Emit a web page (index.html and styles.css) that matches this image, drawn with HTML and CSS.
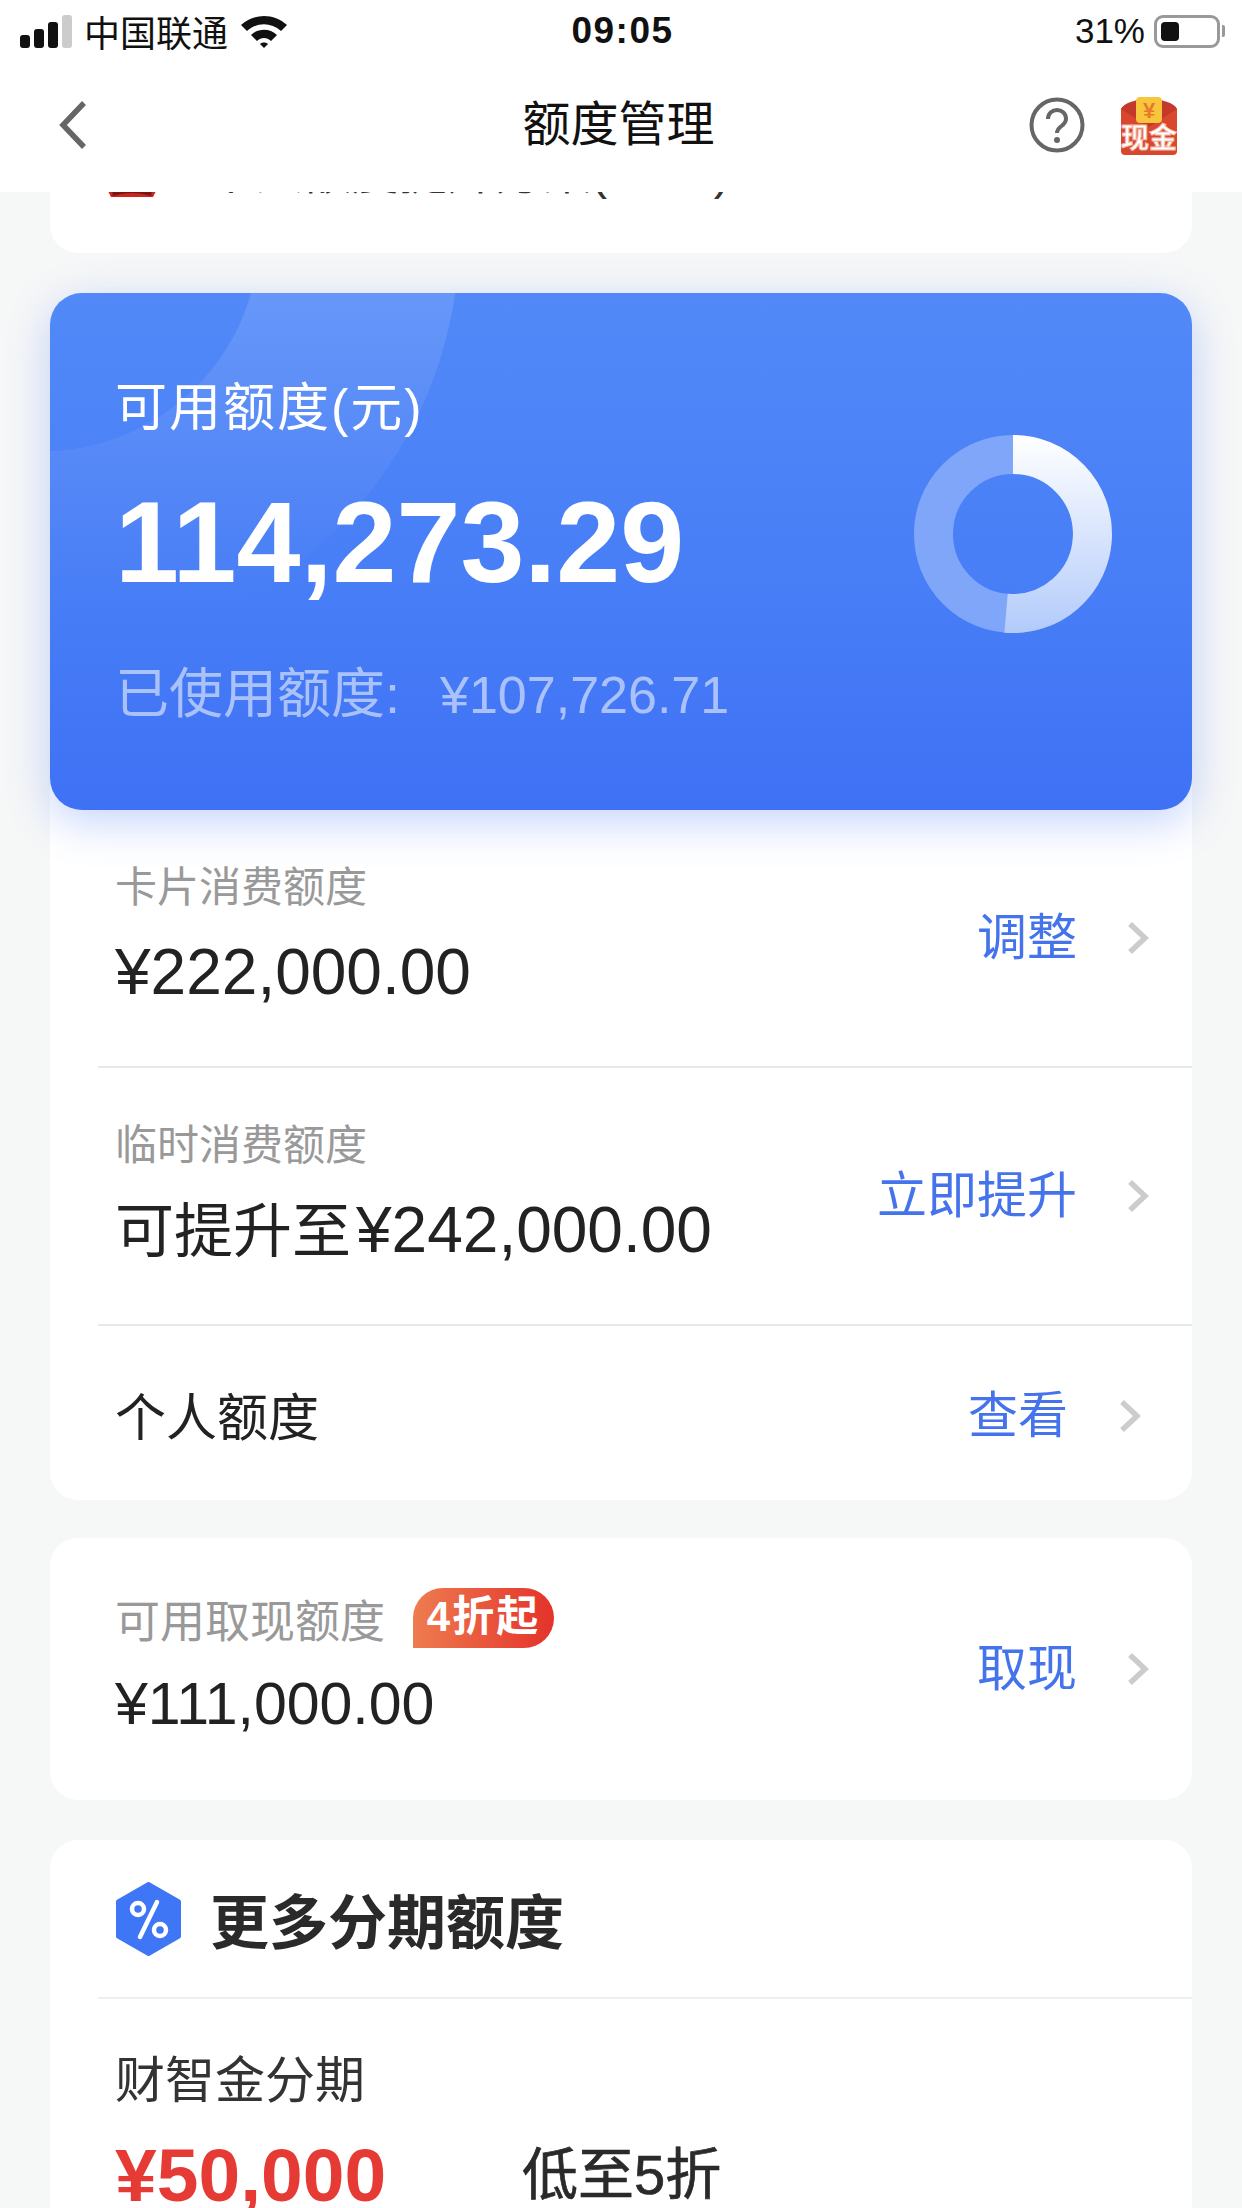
FILE: index.html
```html
<!DOCTYPE html>
<html lang="zh-CN">
<head>
  <meta charset="UTF-8">
  <title>额度管理</title>
  <link rel="stylesheet" href="styles.css">
</head>
<body>
  <div class="page">

    <header class="top">
      <div class="status">
        <div class="status-left">
          <div class="signal">
            <i class="bar-1"></i><i class="bar-2"></i><i class="bar-3"></i><i class="bar-4"></i>
          </div>
          <span>中国联通</span>
          <svg class="wifi" viewBox="0 0 48 34">
            <path d="M1 11C14 -1 34 -1 47 11L41 17C31 8 17 8 7 17Z"/>
            <path d="M11 21C18 14 30 14 37 21L31 27C27 23 21 23 17 27Z"/>
            <path d="M20 30C22 28 26 28 28 30L24 34Z"/>
          </svg>
        </div>
        <div class="clock">09:05</div>
        <div class="status-right">
          <span>31%</span>
          <div class="battery"><i></i></div>
          <div class="battery-tip"></div>
        </div>
      </div>
      <nav class="nav">
        <svg class="back" viewBox="0 0 30 50">
          <path d="M26 3L5 25L26 47" fill="none" stroke="#666" stroke-width="5.5"/>
        </svg>
        <h1>额度管理</h1>
        <div class="nav-icons">
          <svg class="help" viewBox="0 0 56 56">
            <circle cx="28" cy="28" r="25.5" fill="none" stroke="#666" stroke-width="4"/>
            <path d="M19 22C19 10 37 10 37 22C37 29 28 29 28 36" fill="none" stroke="#666" stroke-width="4"/>
            <circle cx="28" cy="43" r="3" fill="#666"/>
          </svg>
          <svg class="packet" viewBox="0 0 60 60">
            <path d="M2 14C8 3 52 3 58 14V56Q58 60 54 60H6Q2 60 2 56Z" fill="#d9472f"/>
            <path d="M2 14C8 1 52 1 58 14L30 32Z" fill="#c5392a"/>
            <rect x="17" y="2" width="26" height="26" rx="4" fill="#f7c63c"/>
            <text x="30" y="23" class="packet-yen">¥</text>
            <text x="30" y="53" class="packet-text">现金</text>
          </svg>
        </div>
      </nav>
    </header>

    <main class="content">
      <section class="card tips">
        <svg class="tips-icon" viewBox="0 0 48 48">
          <path d="M0 42H48L45 48H3Z" fill="#c8261f"/>
          <path d="M5 47Q24 41 43 47L44 42H4Z" fill="#7a1414"/>
        </svg>
        <span>个人额度提升方案(2021)</span>
      </section>

      <section class="hero">
        <div class="hero-text">
          <div class="hero-label">可用额度(元)</div>
          <div class="hero-amount">114,273.29</div>
          <div class="hero-used"><span class="hero-used-cn">已使用额度:</span><span>¥107,726.71</span></div>
        </div>
        <svg class="donut" viewBox="0 0 198 198">
          <defs>
            <linearGradient id="donut-fill" gradientUnits="userSpaceOnUse" x1="0" y1="0" x2="0" y2="198">
              <stop offset="0" stop-color="#ffffff"/>
              <stop offset="1" stop-color="#b3cbfb"/>
            </linearGradient>
          </defs>
          <circle cx="99" cy="99" r="79.5" fill="none" stroke="#7fa6f8" stroke-width="39"/>
          <path d="M99 19.5A79.5 79.5 0 1 1 92.07 178.2" fill="none" stroke="url(#donut-fill)" stroke-width="39"/>
        </svg>
      </section>

      <section class="panel">
        <div class="row">
          <div>
            <div class="label">卡片消费额度</div>
            <div class="value">¥222,000.00</div>
          </div>
          <div class="action">
            <span>调整</span>
            <svg class="arrow" viewBox="0 0 22 34"><path d="M3 3L18 17L3 31" fill="none" stroke="#ccc" stroke-width="5.5"/></svg>
          </div>
        </div>
        <div class="row">
          <div>
            <div class="label">临时消费额度</div>
            <div class="value"><span class="value-cn">可提升至</span>¥242,000.00</div>
          </div>
          <div class="action">
            <span>立即提升</span>
            <svg class="arrow" viewBox="0 0 22 34"><path d="M3 3L18 17L3 31" fill="none" stroke="#ccc" stroke-width="5.5"/></svg>
          </div>
        </div>
        <div class="row row-plain">
          <div class="plain-title">个人额度</div>
          <div class="action">
            <span>查看</span>
            <svg class="arrow" viewBox="0 0 22 34"><path d="M3 3L18 17L3 31" fill="none" stroke="#ccc" stroke-width="5.5"/></svg>
          </div>
        </div>
      </section>

      <section class="card cash">
        <div class="cash-left">
          <div class="cash-head">
            <span class="cash-label">可用取现额度</span>
            <span class="badge">4折起</span>
          </div>
          <div class="cash-value">¥111,000.00</div>
        </div>
        <div class="action">
          <span>取现</span>
          <svg class="arrow" viewBox="0 0 22 34"><path d="M3 3L18 17L3 31" fill="none" stroke="#ccc" stroke-width="5.5"/></svg>
        </div>
      </section>

      <section class="card more">
        <div class="more-head">
          <svg class="hex" viewBox="0 0 67 74">
            <path d="M33.5 2L64 19.5V54.5L33.5 72L3 54.5V19.5Z" fill="#3f76f6" stroke="#3f76f6" stroke-width="4" stroke-linejoin="round"/>
            <circle cx="23" cy="27" r="6" fill="none" stroke="#fff" stroke-width="4.5"/>
            <circle cx="45" cy="48" r="6" fill="none" stroke="#fff" stroke-width="4.5"/>
            <path d="M42 20L25 55" stroke="#fff" stroke-width="4.5" stroke-linecap="round"/>
          </svg>
          <h2>更多分期额度</h2>
        </div>
        <div class="more-body">
          <div class="more-name">财智金分期</div>
          <div class="more-offer">
            <span class="more-price">¥50,000</span>
            <span class="more-rate">低至5折</span>
          </div>
        </div>
      </section>
    </main>

  </div>
</body>
</html>
```

FILE: styles.css
```css
* {
  box-sizing: border-box;
}

html, body {
  margin: 0;
  padding: 0;
  height: 2208px;
  overflow: hidden;
}

body {
  font-family: "Liberation Sans", "Noto Sans CJK SC", sans-serif;
  background-color: #f6f7f7;
  color: #222;
}

.page {
  width: 1242px;
  height: 2208px;
  overflow: hidden;
}

/* top bar */
.top {
  position: relative;
  z-index: 3;
  height: 192px;
  background: #fff;
}

.status {
  height: 62px;
  padding: 0 17px 0 20px;
  display: grid;
  grid-template-columns: 1fr auto 1fr;
  align-items: center;
  font-size: 35px;
  color: #111;
}

.status-left {
  display: flex;
  align-items: center;
  gap: 12px;
  font-size: 36px;
}

.signal {
  display: flex;
  align-items: flex-end;
  gap: 4px;
  height: 33px;
}

.signal i {
  display: block;
  width: 10px;
  background: #111;
  border-radius: 3px;
}

.bar-1 { height: 13px; }
.bar-2 { height: 19px; }
.bar-3 { height: 26px; }
.bar-4 { height: 33px; background: #ccc !important; }

.wifi {
  width: 48px;
  height: 34px;
  fill: #111;
}

.clock {
  font-weight: bold;
  font-size: 37px;
  letter-spacing: 1.5px;
}

.status-right {
  display: flex;
  align-items: center;
  justify-content: flex-end;
}

.battery {
  width: 66px;
  height: 33px;
  margin-left: 9px;
  padding: 4px;
  border: 3px solid #999;
  border-radius: 9px;
}

.battery i {
  display: block;
  width: 18px;
  height: 100%;
  background: #111;
  border-radius: 4px;
}

.battery-tip {
  width: 3px;
  height: 12px;
  margin-left: 2px;
  background: #999;
  border-radius: 0 2px 2px 0;
}

.nav {
  height: 130px;
  padding: 0 63px 5px 58px;
  display: grid;
  grid-template-columns: 1fr auto 1fr;
  align-items: center;
}

.nav h1 {
  margin: 0;
  font-size: 48px;
  line-height: 48px;
  font-weight: normal;
  color: #111;
}

.nav-icons {
  display: flex;
  align-items: center;
  justify-content: flex-end;
  gap: 34px;
}

.back {
  width: 30px;
  height: 50px;
}

.help {
  width: 56px;
  height: 56px;
}

.packet {
  width: 60px;
  height: 60px;
}

.packet-yen {
  font-size: 22px;
  font-weight: bold;
  fill: #e8792a;
  text-anchor: middle;
}

.packet-text {
  font-size: 28px;
  font-weight: bold;
  fill: #fff;
  stroke: #f4b9a6;
  stroke-width: 1;
  text-anchor: middle;
}

/* cards */
.content {
  width: 1142px;
  margin-left: 50px;
}

.card {
  background: #fff;
  border-radius: 28px;
}

.tips {
  height: 104px;
  margin-top: -43px;
  padding: 0 0 0 58px;
  display: flex;
  align-items: flex-start;
  gap: 51px;
  font-size: 48px;
  line-height: 48px;
  color: #333;
  white-space: nowrap;
}

.tips-icon {
  width: 48px;
  height: 48px;
  flex: none;
}

.hero {
  position: relative;
  z-index: 2;
  height: 517px;
  margin-top: 40px;
  padding: 85px 80px 0 65px;
  display: flex;
  justify-content: space-between;
  align-items: flex-start;
  color: #fff;
  border-radius: 32px;
  box-shadow: 0 12px 44px rgba(64, 113, 245, 0.3);
  background:
    linear-gradient(180deg, rgba(82, 137, 248, 0) 0, #477df6 60%, #3f71f5 100%),
    radial-gradient(circle at -9px -60px, transparent 218px, rgba(255, 255, 255, 0.12) 219px, rgba(255, 255, 255, 0.12) 418px, transparent 419px),
    #5289f8;
}

.hero-label {
  font-size: 52px;
  line-height: 60px;
  letter-spacing: 2px;
}

.hero-amount {
  margin-top: 39px;
  font-size: 115px;
  line-height: 130px;
  font-weight: bold;
}

.hero-used {
  margin-top: 57px;
  font-size: 52px;
  line-height: 60px;
  color: rgba(255, 255, 255, 0.55);
}

.hero-used-cn {
  font-size: 54px;
  margin-right: 40px;
}

.donut {
  width: 198px;
  height: 198px;
  margin-top: 57px;
  flex: none;
}

.panel {
  height: 720px;
  margin-top: -30px;
  padding: 30px 0 0 48px;
  background: #fff;
  border-radius: 0 0 28px 28px;
}

.row {
  height: 258px;
  padding: 48px 43px 0 17px;
  display: flex;
  justify-content: space-between;
  border-bottom: 2px solid #e8e8e8;
}

.row .action {
  margin-top: 50px;
  align-self: flex-start;
}

.label {
  font-size: 42px;
  line-height: 60px;
  color: #999;
}

.value {
  margin-top: 12px;
  font-size: 64px;
  line-height: 84px;
  white-space: nowrap;
}

.value-cn {
  font-size: 59px;
  margin-right: 5px;
}

.row-plain {
  height: 175px;
  padding: 0 51px 0 17px;
  align-items: center;
  border-bottom: none;
}

.row-plain .action {
  margin-top: 4px;
  align-self: center;
  gap: 51px;
}

.plain-title {
  font-size: 51px;
}

.action {
  display: flex;
  align-items: center;
  gap: 50px;
  font-size: 50px;
  line-height: 60px;
  color: #4573ec;
}

.arrow {
  width: 22px;
  height: 34px;
  flex: none;
}

.cash {
  height: 262px;
  margin-top: 38px;
  padding: 0 43px 0 65px;
  display: flex;
  justify-content: space-between;
  align-items: center;
}

.cash-left {
  padding-bottom: 16px;
}

.cash-head {
  display: flex;
  align-items: center;
  gap: 28px;
}

.cash-label {
  font-size: 45px;
  color: #999;
}

.badge {
  width: 141px;
  height: 60px;
  text-align: center;
  font-size: 42px;
  line-height: 58px;
  font-weight: bold;
  color: #fff;
  letter-spacing: 2px;
  border-radius: 30px 30px 30px 0;
  background: linear-gradient(90deg, #ee7c50, #e4322a);
}

.cash-value {
  margin-top: 20px;
  font-size: 59px;
  line-height: 66px;
}

.more {
  margin-top: 40px;
  height: 500px;
  padding-left: 48px;
}

.more-head {
  height: 159px;
  padding-left: 17px;
  display: flex;
  align-items: center;
  gap: 28px;
  border-bottom: 2px solid #efefef;
}

.hex {
  width: 67px;
  height: 74px;
  flex: none;
}

.more-head h2 {
  margin: 0;
  font-size: 59px;
  color: #2a2a2a;
}

.more-body {
  padding: 52px 0 0 17px;
}

.more-name {
  font-size: 50px;
  line-height: 60px;
  color: #333;
}

.more-offer {
  margin-top: 31px;
  display: flex;
  align-items: center;
  gap: 136px;
}

.more-price {
  font-size: 75px;
  line-height: 66px;
  font-weight: bold;
  color: #e63a35;
}

.more-rate {
  font-size: 56px;
  line-height: 66px;
  color: #2a2a2a;
  -webkit-text-stroke: 0.7px #2a2a2a;
}
```
